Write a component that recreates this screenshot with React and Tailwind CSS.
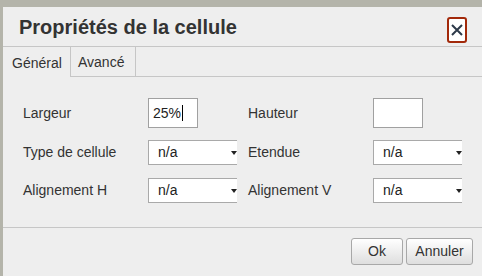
import { useState } from "react";

const font = { fontFamily: '"Liberation Sans", Arial, sans-serif' };

function Select({ value }) {
  return (
    <div className="relative h-[25px] w-[89px] border border-r-0 border-[#a9a9a9] bg-white flex items-center pl-[9px] text-[14px] text-[#222]">
      {value}
      <span className="absolute right-0 top-[10px] w-0 h-0 border-l-[3px] border-r-[3px] border-t-[4px] border-l-transparent border-r-transparent border-t-[#222]" />
    </div>
  );
}

function Row({ label1, control1, label2, control2, className = "" }) {
  return (
    <div className={`flex items-center ${className}`}>
      <span className="w-[125px] text-[14px] text-[#333]">{label1}</span>
      <div className="w-[100px]">{control1}</div>
      <span className="w-[125px] text-[14px] text-[#333]">{label2}</span>
      <div>{control2}</div>
    </div>
  );
}

export default function App() {
  const [tab, setTab] = useState("general");

  return (
    <div className="w-[482px] h-[276px] overflow-hidden bg-[#b4b4aa] pl-[3px] pt-[7px]" style={font}>
      <div className="h-full bg-[#eeeeee] flex flex-col">
        {/* Title bar */}
        <div className="h-[40px] shrink-0 border-b border-[#c6c6c6] flex items-center justify-between pl-[16px] pr-[15px]">
          <h1 className="text-[20px] font-bold text-[#333] leading-none mt-[1px]">
            Propriétés de la cellule
          </h1>
          <button className="w-[20px] h-[26px] mt-[6px] rounded-[3px] border-2 border-[#a2290a] bg-white flex items-center justify-center">
            <svg width="12" height="12" viewBox="0 0 12 12">
              <path d="M1 1 L11 11 M11 1 L1 11" stroke="#2d3a4a" strokeWidth="2" />
            </svg>
          </button>
        </div>

        {/* Tabs */}
        <div className="h-[30px] shrink-0 flex text-[14px] text-[#333]">
          <button
            onClick={() => setTab("general")}
            className="w-[67px] pl-[9px] pt-[2px] text-left"
          >
            Général
          </button>
          <button
            onClick={() => setTab("avance")}
            className="w-[66px] pl-[7px] pt-[2px] text-left border-x border-b border-[#c6c6c6]"
          >
            Avancé
          </button>
          <div className="flex-1 border-b border-[#c6c6c6]" />
        </div>

        {/* Body */}
        <div className="h-[150px] shrink-0 flex flex-col pl-[20px] pt-[21px] gap-[12px]">
          {tab === "general" && (
            <>
              <Row
                label1="Largeur"
                control1={
                  <div className="h-[30px] w-[50px] border border-[#a0a0a0] bg-white flex items-center pl-[4px] text-[14px] text-[#222]">
                    25%<span className="w-px h-[16px] bg-black ml-[1px]" />
                  </div>
                }
                label2="Hauteur"
                control2={<div className="h-[30px] w-[50px] border border-[#a0a0a0] bg-white" />}
              />
              <Row
                label1="Type de cellule"
                control1={<Select value="n/a" />}
                label2="Etendue"
                control2={<Select value="n/a" />}
              />
              <Row
                className="mt-[1px]"
                label1="Alignement H"
                control1={<Select value="n/a" />}
                label2="Alignement V"
                control2={<Select value="n/a" />}
              />
            </>
          )}
        </div>

        {/* Footer */}
        <div className="flex-1 border-t border-[#c6c6c6] flex justify-end items-start pt-[10px] pr-[9px] gap-[3px]">
          <button className="w-[52px] h-[27px] rounded-[3px] border border-[#a8a8a8] bg-gradient-to-b from-white to-[#dedede] text-[14px] text-[#333]">
            Ok
          </button>
          <button className="w-[67px] h-[27px] rounded-[3px] border border-[#a8a8a8] bg-gradient-to-b from-white to-[#dedede] text-[14px] text-[#333]">
            Annuler
          </button>
        </div>
      </div>
    </div>
  );
}
